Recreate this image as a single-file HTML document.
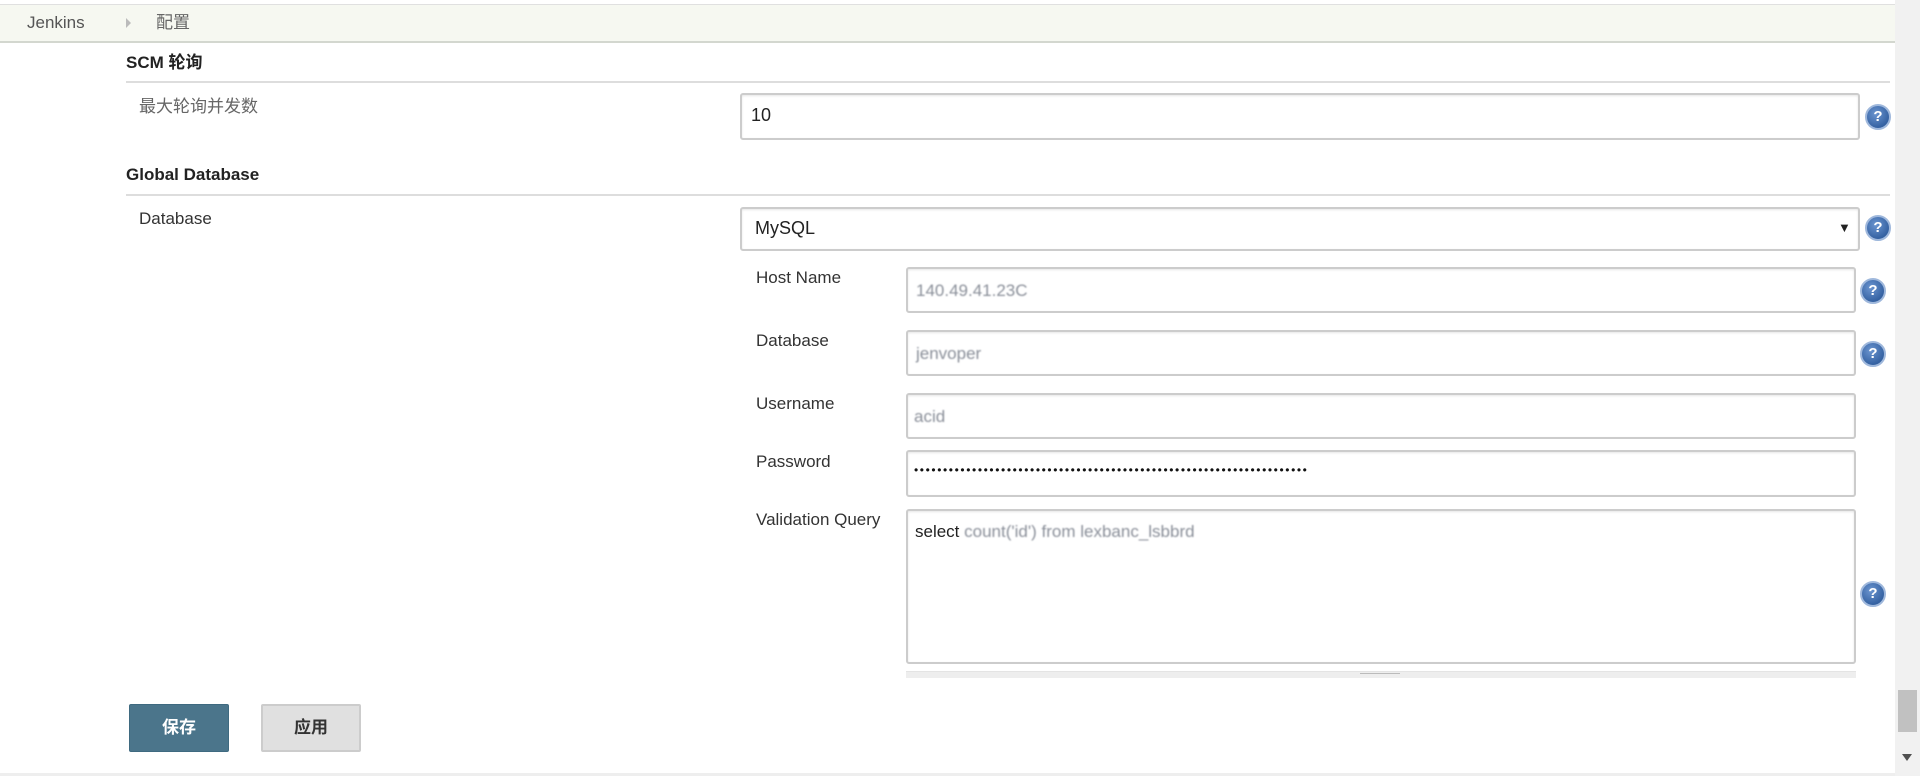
<!DOCTYPE html>
<html><head><meta charset="utf-8"><style>
*{box-sizing:border-box;margin:0;padding:0}
body{width:1920px;height:776px;overflow:hidden;background:#fff;position:relative;font-family:"Liberation Sans","Noto Sans CJK SC",sans-serif;color:#333;font-size:17px;line-height:1.2}
.a{position:absolute}
.bc{left:0;top:4px;width:1895px;height:39px;background:#f6f8f1;border-top:1px solid #e0e0e0;border-bottom:2px solid #d3d7cf}
.h{font-weight:bold;color:#222;font-size:17px}
.line{height:2px;background:#ddd}
.inp{border:2px solid #ccc;border-radius:3px;background:#fff;box-shadow:inset 0 1px 2px rgba(0,0,0,.1)}
.lbl{font-size:17px;color:#333}
.help{width:26px;height:26px;border-radius:50%;background:radial-gradient(circle at 40% 35%,#6b95d0,#1f4d8f);border:2px solid #9fb8dc;color:#fff;font-weight:bold;font-size:15px;text-align:center;line-height:22px}
.blur{color:#8a8f99;filter:blur(0.8px);font-size:17px}
</style></head><body>
<div class="a bc"></div>
<div class="a" style="left:27px;top:13px;font-size:17px;color:#555">Jenkins</div>
<div class="a" style="left:126px;top:18px;width:0;height:0;border-left:5px solid #bbb;border-top:5px solid transparent;border-bottom:5px solid transparent"></div>
<div class="a" style="left:156px;top:13px;font-size:17px;color:#666;line-height:20px">配置</div>

<div class="a h" style="left:126px;top:53px;line-height:20px">SCM 轮询</div>
<div class="a line" style="left:126px;top:81px;width:1764px"></div>
<div class="a lbl" style="left:139px;top:97px;color:#666;line-height:20px">最大轮询并发数</div>
<div class="a inp" style="left:740px;top:93px;width:1120px;height:47px"></div>
<div class="a" style="left:751px;top:105px;font-size:18px;color:#222">10</div>
<div class="a help" style="left:1865px;top:104px">?</div>

<div class="a h" style="left:126px;top:165px">Global Database</div>
<div class="a line" style="left:126px;top:194px;width:1764px"></div>
<div class="a lbl" style="left:139px;top:209px">Database</div>
<div class="a inp" style="left:740px;top:207px;width:1120px;height:44px"></div>
<div class="a" style="left:755px;top:218px;font-size:18px;color:#222">MySQL</div>
<div class="a" style="left:1838px;top:220px;font-size:13px;color:#222">▼</div>
<div class="a help" style="left:1865px;top:215px">?</div>

<div class="a lbl" style="left:756px;top:268px">Host Name</div>
<div class="a inp" style="left:906px;top:267px;width:950px;height:46px"></div>
<div class="a blur" style="left:916px;top:281px">140.49.41.23C</div>
<div class="a help" style="left:1860px;top:278px">?</div>

<div class="a lbl" style="left:756px;top:331px">Database</div>
<div class="a inp" style="left:906px;top:330px;width:950px;height:46px"></div>
<div class="a blur" style="left:916px;top:344px">jenvoper</div>
<div class="a help" style="left:1860px;top:341px">?</div>

<div class="a lbl" style="left:756px;top:394px">Username</div>
<div class="a inp" style="left:906px;top:393px;width:950px;height:46px"></div>
<div class="a blur" style="left:914px;top:407px">acid</div>

<div class="a lbl" style="left:756px;top:452px">Password</div>
<div class="a inp" style="left:906px;top:450px;width:950px;height:47px"></div>
<div class="a" style="left:914px;top:463px;font-size:12px;letter-spacing:1.6px;color:#111;white-space:nowrap">••••••••••••••••••••••••••••••••••••••••••••••••••••••••••••••••••••</div>

<div class="a lbl" style="left:756px;top:510px">Validation Query</div>
<div class="a inp" style="left:906px;top:509px;width:950px;height:155px"></div>
<div class="a" style="left:915px;top:522px;font-size:17px;color:#222">select <span class="blur">count('id') from lexbanc_lsbbrd</span></div>
<div class="a" style="left:906px;top:671px;width:950px;height:7px;background:#eee;border-top:1px solid #e4e4e4"></div>
<div class="a" style="left:1360px;top:673px;width:40px;height:1px;background:#bbb"></div>
<div class="a help" style="left:1860px;top:581px">?</div>

<div class="a" style="left:129px;top:704px;width:100px;height:48px;background:#4b758b;border:1px solid #3f6a80;border-radius:2px;color:#fff;font-weight:bold;font-size:17px;text-align:center;line-height:46px">保存</div>
<div class="a" style="left:261px;top:704px;width:100px;height:48px;background:#e0e0e0;border:2px solid #ccc;border-radius:2px;color:#333;font-weight:bold;font-size:17px;text-align:center;line-height:44px">应用</div>

<div class="a" style="left:0;top:773px;width:1895px;height:3px;background:#eee"></div>
<div class="a" style="left:1895px;top:0;width:25px;height:776px;background:#f1f1f1"></div>
<div class="a" style="left:1898px;top:690px;width:19px;height:42px;background:#c1c1c1"></div>
<div class="a" style="left:1902px;top:754px;width:0;height:0;border-top:7px solid #505050;border-left:5px solid transparent;border-right:5px solid transparent"></div>
</body></html>
